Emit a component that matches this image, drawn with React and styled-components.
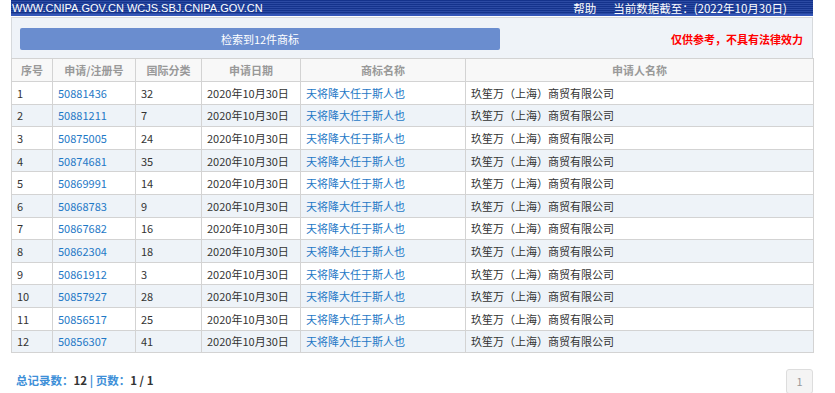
import React from "react";
import styled, { createGlobalStyle } from "styled-components";

const GlobalStyle = createGlobalStyle`
  body {
    margin: 0;
    background: #fff;
    font-family: "Noto Sans CJK SC", "Liberation Sans", sans-serif;
    font-size: 11px;
    color: #333;
  }
`;

const Page = styled.div`
  width: 802px;
  padding-left: 11px;
`;

const TopBar = styled.div`
  display: flex;
  justify-content: space-between;
  align-items: center;
  height: 16px;
  padding: 0 26px 0 1px;
  color: #fff;
  font-family: "Liberation Sans", "Noto Sans CJK SC", sans-serif;
  font-size: 11px;
  line-height: 16px;
  background: repeating-linear-gradient(
      to bottom,
      #14338c 0px,
      #14338c 1px,
      #2b4aa3 1px,
      #2b4aa3 2px
    ),
    #14338c;
  box-shadow: inset 0 -2px 0 #3557b8;
`;

const TopRight = styled.div`
  display: flex;
  gap: 17px;
  font-family: "Noto Sans CJK SC", "Liberation Sans", sans-serif;
  font-size: 11.5px;
`;

const Panel = styled.div`
  margin-top: 1px;
  height: 40px;
  display: flex;
  align-items: center;
  justify-content: space-between;
  padding: 0 9px 0 8px;
  background: #eff3f8;
  border: 1px solid #d6d9dc;
  border-bottom: none;
`;

const SearchButton = styled.div`
  width: 480px;
  height: 22px;
  line-height: 22px;
  margin-top: 2px;
  border-radius: 2px;
  background: #6a8dcf;
  color: #fff;
  text-align: center;
  font-size: 11px;
`;

const Notice = styled.div`
  color: #ff0000;
  font-weight: bold;
  font-size: 11px;
  margin-top: 2px;
`;

const Table = styled.table`
  width: 802px;
  border-collapse: collapse;
  table-layout: fixed;
`;

const Th = styled.th`
  height: 22px;
  padding: 0;
  border: 1px solid #d3d3d3;
  background: #f8f8f8;
  color: #999;
  font-weight: bold;
  font-size: 11px;
  text-align: center;
`;

const Row = styled.tr`
  background: ${(p) => (p.$alt ? "#eef3f8" : "#fff")};
`;

const Td = styled.td`
  height: 21.6px;
  padding: 0 5px;
  border: 1px solid #d3d3d3;
  font-size: 11px;
  color: ${(p) => (p.$link ? "#1e78c6" : "#333")};
  white-space: nowrap;
  overflow: hidden;
`;

const Footer = styled.div`
  display: flex;
  justify-content: space-between;
  align-items: flex-start;
  margin-top: 16px;
`;

const Summary = styled.div`
  margin-top: 3px;
  padding-left: 5px;
  color: #3d8fd8;
  font-weight: bold;
  font-size: 11.5px;
`;

const Num = styled.span`
  color: #333;
`;

const PageBtn = styled.div`
  width: 27px;
  height: 25px;
  line-height: 23px;
  box-sizing: border-box;
  border: 1px solid #ddd;
  border-radius: 3px;
  background: #f4f4f4;
  color: #999;
  text-align: center;
  font-size: 11px;
`;

const rows = [
  ["50881436", "32"],
  ["50881211", "7"],
  ["50875005", "24"],
  ["50874681", "35"],
  ["50869991", "14"],
  ["50868783", "9"],
  ["50867682", "16"],
  ["50862304", "18"],
  ["50861912", "3"],
  ["50857927", "28"],
  ["50856517", "25"],
  ["50856307", "41"],
];

const widths = [41, 83, 66, 99, 165, 348];
const heads = ["序号", "申请/注册号", "国际分类", "申请日期", "商标名称", "申请人名称"];

export default function App() {
  return (
    <>
      <GlobalStyle />
      <Page>
        <TopBar>
          <span>WWW.CNIPA.GOV.CN WCJS.SBJ.CNIPA.GOV.CN</span>
          <TopRight>
            <span>帮助</span>
            <span>当前数据截至：(2022年10月30日)</span>
          </TopRight>
        </TopBar>
        <Panel>
          <SearchButton>检索到12件商标</SearchButton>
          <Notice>仅供参考，不具有法律效力</Notice>
        </Panel>
        <Table>
          <colgroup>
            {widths.map((w, i) => (
              <col key={i} style={{ width: w }} />
            ))}
          </colgroup>
          <thead>
            <tr>
              {heads.map((h) => (
                <Th key={h}>{h}</Th>
              ))}
            </tr>
          </thead>
          <tbody>
            {rows.map(([no, cls], i) => (
              <Row key={no} $alt={i % 2 === 1}>
                <Td>{i + 1}</Td>
                <Td $link>{no}</Td>
                <Td>{cls}</Td>
                <Td>2020年10月30日</Td>
                <Td $link>天将降大任于斯人也</Td>
                <Td>玖笙万（上海）商贸有限公司</Td>
              </Row>
            ))}
          </tbody>
        </Table>
        <Footer>
          <Summary>
            总记录数：<Num>12</Num> | 页数：<Num>1 / 1</Num>
          </Summary>
          <PageBtn>1</PageBtn>
        </Footer>
      </Page>
    </>
  );
}
